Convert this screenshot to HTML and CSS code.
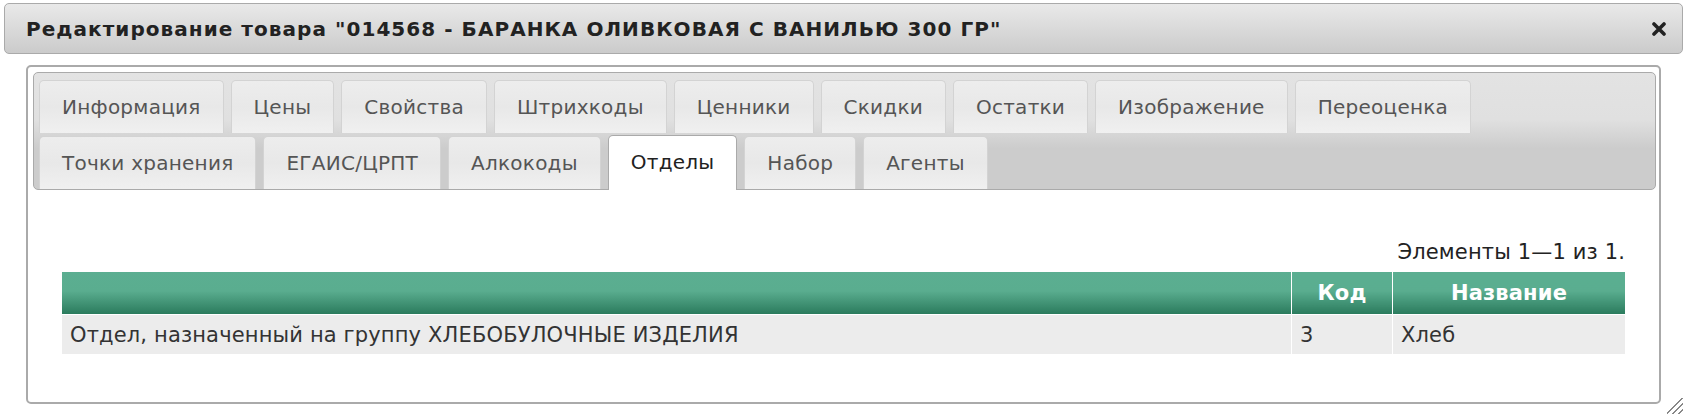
FILE: index.html
```html
<!DOCTYPE html>
<html lang="ru">
<head>
    <meta charset="UTF-8">
    <title>Редактирование товара</title>
    <link rel="stylesheet" href="styles.css">
</head>
<body>
    <div class="dialog">
        <div class="titlebar">
            <span class="title">Редактирование товара "014568 - БАРАНКА ОЛИВКОВАЯ С ВАНИЛЬЮ 300 ГР"</span>
            <a href="#" class="close" title="Закрыть">
                <svg width="14" height="14" viewBox="0 0 14 14"><path d="M2 2 L12 12 M12 2 L2 12" stroke="#222" stroke-width="3.6" stroke-linecap="round"/></svg>
            </a>
        </div>

        <div class="content">
            <div class="tabs">
                <ul class="tab-nav">
                    <li class="tab">Информация</li>
                    <li class="tab">Цены</li>
                    <li class="tab">Свойства</li>
                    <li class="tab">Штрихкоды</li>
                    <li class="tab">Ценники</li>
                    <li class="tab">Скидки</li>
                    <li class="tab">Остатки</li>
                    <li class="tab">Изображение</li>
                    <li class="tab">Переоценка</li>
                    <li class="tab">Точки хранения</li>
                    <li class="tab">ЕГАИС/ЦРПТ</li>
                    <li class="tab">Алкокоды</li>
                    <li class="tab active">Отделы</li>
                    <li class="tab">Набор</li>
                    <li class="tab">Агенты</li>
                </ul>
            </div>

            <div class="panel">
                <div class="summary">Элементы 1—1 из 1.</div>
                <table class="grid">
                    <thead>
                        <tr>
                            <th></th>
                            <th class="col-code">Код</th>
                            <th class="col-name">Название</th>
                        </tr>
                    </thead>
                    <tbody>
                        <tr>
                            <td>Отдел, назначенный на группу ХЛЕБОБУЛОЧНЫЕ ИЗДЕЛИЯ</td>
                            <td>3</td>
                            <td>Хлеб</td>
                        </tr>
                    </tbody>
                </table>
            </div>
        </div>

        <span class="resize-grip"></span>
    </div>
</body>
</html>
```

FILE: styles.css
```css
body {
    margin: 0;
    background: #fff;
    font-family: "DejaVu Sans", Verdana, sans-serif;
    font-size: 20px;
    color: #333;
}
.dialog {
    position: relative;
    padding: 3px 4px 14px 4px;
}
.titlebar {
    display: flex;
    align-items: center;
    justify-content: space-between;
    height: 49px;
    padding: 0 16px 0 21px;
    border: 1px solid #aaa;
    border-radius: 5px;
    background: linear-gradient(#e9e9e9, #cbcbcb);
}
.title {
    font-weight: bold;
    color: #222;
    letter-spacing: 1.05px;
}
.close {
    display: flex;
}
.content {
    margin: 11px 22px 0 22px;
    padding: 5px 3px 0 5px;
    border: 2px solid #aaa;
    border-radius: 5px;
    height: 330px;
}
.tabs {
    border: 1px solid #aaa;
    border-radius: 5px;
    padding: 7px 5px 0 5px;
    background: linear-gradient(#e3e3e3 0%, #e0e0e0 40%, #cccccc 65%, #cccccc 100%);
}
.tab-nav {
    display: flex;
    flex-wrap: wrap;
    gap: 3px 7px;
    margin: 0;
    padding: 0;
    list-style: none;
}
.tab {
    height: 52px;
    line-height: 52px;
    padding: 0 22px;
    border: 1px solid #d3d3d3;
    border-bottom: none;
    border-radius: 5px 5px 0 0;
    background: linear-gradient(#ededed 0%, #e8e8e8 50%, #f0f0f0 100%);
    color: #555;
    letter-spacing: 0.25px;
}
.tab.active {
    background: #fff;
    border-color: #aaa;
    color: #212121;
    margin-top: -1px;
    height: 54px;
    margin-bottom: -1px;
}
.panel {
    padding: 50px 31px 0 29px;
    font-size: 21px;
    letter-spacing: 0.15px;
}
.summary {
    text-align: right;
    color: #222;
    line-height: 24px;
    margin-bottom: 8px;
}
.grid {
    width: 100%;
    border-collapse: collapse;
}
.grid th {
    height: 42px;
    padding: 0 8px;
    background: linear-gradient(#5bae91 0%, #5aad8f 45%, #2b7b5d 100%);
    color: #fff;
    font-weight: bold;
    text-align: center;
    border-left: 1px solid #fff;
    border-bottom: 1px solid #fff;
}
.grid th:first-child,
.grid td:first-child {
    border-left: none;
}
.grid td {
    height: 39px;
    padding: 0 8px;
    background: #ececec;
    color: #333;
    border-left: 1px solid #fff;
}
.grid .col-code {
    width: 84px;
}
.grid .col-name {
    width: 216px;
}
.resize-grip {
    position: absolute;
    right: 4px;
    bottom: 4px;
    width: 16px;
    height: 16px;
    background: linear-gradient(135deg, transparent 45%, #888 45%, #888 52%, transparent 52%, transparent 64%, #888 64%, #888 71%, transparent 71%, transparent 83%, #888 83%, #888 90%, transparent 90%);
}
```
